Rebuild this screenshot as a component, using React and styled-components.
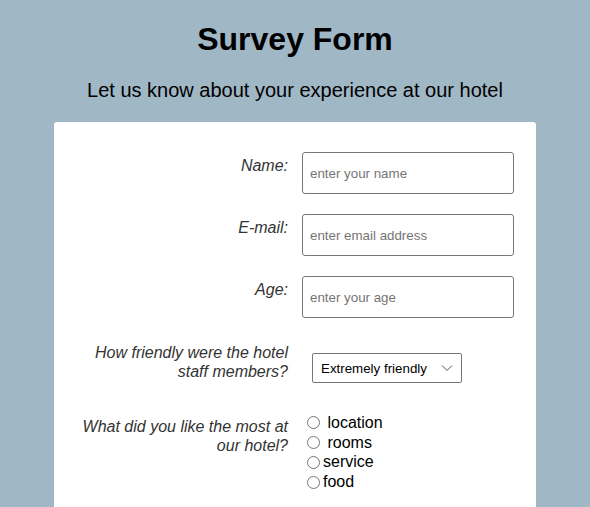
import React from "react";
import styled, { createGlobalStyle } from "styled-components";

const GlobalStyle = createGlobalStyle`
  body {
    margin: 0;
    background-color: #a0b7c5;
    font-family: "Liberation Sans", Arial, Helvetica, sans-serif;
  }
`;

const App = () => {
  return (
    <Page>
      <GlobalStyle />
      <Title>Survey Form</Title>
      <Subtitle>Let us know about your experience at our hotel</Subtitle>

      <Card>
        <Row>
          <Label htmlFor="name">Name:</Label>
          <TextInput id="name" type="text" placeholder="enter your name" />
        </Row>
        <Row>
          <Label htmlFor="email">E-mail:</Label>
          <TextInput id="email" type="email" placeholder="enter email address" />
        </Row>
        <Row gap={21}>
          <Label htmlFor="age">Age:</Label>
          <TextInput id="age" type="number" placeholder="enter your age" />
        </Row>

        <Row gap={30}>
          <Label htmlFor="friendly">How friendly were the hotel staff members?</Label>
          <Select id="friendly" defaultValue="extremely">
            <option value="extremely">Extremely friendly</option>
            <option value="very">Very friendly</option>
            <option value="somewhat">Somewhat friendly</option>
          </Select>
        </Row>

        <Row>
          <Label as="p">What did you like the most at our hotel?</Label>
          <Radios>
            <RadioLine>
              <Radio type="radio" name="liked" id="location" />
              <RadioText htmlFor="location"> location</RadioText>
            </RadioLine>
            <RadioLine>
              <Radio type="radio" name="liked" id="rooms" />
              <RadioText htmlFor="rooms"> rooms</RadioText>
            </RadioLine>
            <RadioLine>
              <Radio type="radio" name="liked" id="service" />
              <RadioText htmlFor="service">service</RadioText>
            </RadioLine>
            <RadioLine>
              <Radio type="radio" name="liked" id="food" />
              <RadioText htmlFor="food">food</RadioText>
            </RadioLine>
          </Radios>
        </Row>
      </Card>
    </Page>
  );
};

export default App;

const Page = styled.div`
  display: flex;
  flex-direction: column;
  align-items: center;
  padding-top: 21px;
`;

const Title = styled.h1`
  margin: 0;
  font-size: 32px;
  font-weight: bold;
  color: #000;
`;

const Subtitle = styled.p`
  margin: 21px 0 20px;
  font-size: 20px;
  color: #000;
`;

// white form panel
const Card = styled.form`
  width: 482px;
  box-sizing: border-box;
  background: #fff;
  border-radius: 3px;
  padding: 30px 20px 20px;
  display: flex;
  flex-direction: column;
`;

const Row = styled.div`
  display: grid;
  grid-template-columns: 214px 1fr;
  column-gap: 14px;
  align-items: start;
  margin-bottom: ${(p) => (p.gap ? p.gap : 20)}px;
`;

const Label = styled.label`
  margin: 0;
  padding-top: 5px;
  text-align: right;
  font-size: 16px;
  font-style: italic;
  color: #333;
  line-height: 18.5px;
`;

const TextInput = styled.input`
  width: 212px;
  height: 42px;
  box-sizing: border-box;
  padding: 0 7px;
  border: 1px solid #767676;
  border-radius: 3px;
  font-family: "Liberation Sans", Arial, sans-serif;
  font-size: 13.33px;
  color: #000;
  outline: none;

  &::placeholder {
    color: #757575;
  }
`;

const Select = styled.select`
  margin: 14px 0 0 10px;
  width: 150px;
  height: 30px;
  box-sizing: border-box;
  padding: 0 8px;
  border: 1px solid #767676;
  border-radius: 2px;
  background: #fff;
  font-family: "Liberation Sans", Arial, sans-serif;
  font-size: 13.33px;
  color: #000;
  appearance: none;
  background-image: url("data:image/svg+xml,%3Csvg xmlns='http://www.w3.org/2000/svg' width='12' height='8' viewBox='0 0 12 8'%3E%3Cpath d='M1 1.5l5 5 5-5' fill='none' stroke='%23555' stroke-width='1'/%3E%3C/svg%3E");
  background-repeat: no-repeat;
  background-position: right 8px center;
`;

const Radios = styled.div`
  display: flex;
  flex-direction: column;
`;

const RadioLine = styled.div`
  display: flex;
  align-items: center;
  height: 19.75px;
`;

const Radio = styled.input`
  margin: 0 3px 0 5px;
  width: 13px;
  height: 13px;
`;

const RadioText = styled.label`
  font-size: 16px;
  color: #000;
  white-space: pre;
`;
